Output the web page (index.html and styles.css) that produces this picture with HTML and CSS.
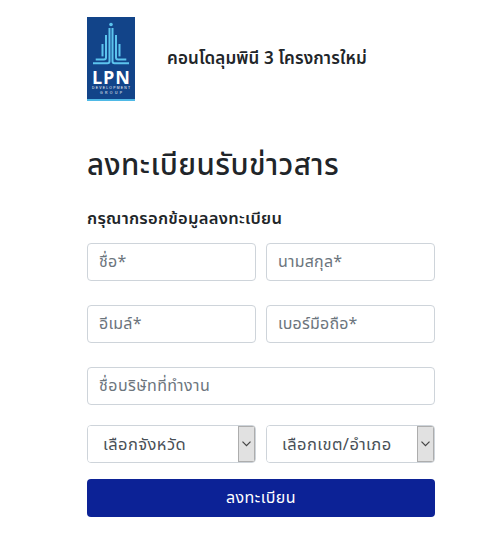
FILE: index.html
```html
<!DOCTYPE html>
<html lang="th">
<head>
<meta charset="UTF-8">
<meta name="viewport" content="width=device-width, initial-scale=1.0">
<title>ลงทะเบียนรับข่าวสาร</title>
<link rel="stylesheet" href="styles.css">
</head>
<body>
    <div class="container">
        <div class="header">
            <svg class="logo" viewBox="0 0 48 84">
                <rect width="48" height="84" fill="#124489"/>
                <rect y="82" width="48" height="2" fill="#4fb9e6"/>
                <circle cx="24" cy="7.5" r="1.8" fill="#5cc4ee"/>
                <g fill="none" stroke="#5cc4ee" stroke-width="2">
                    <path d="M22.5 11v33.3q0 2-2 2H6"/>
                    <path d="M25.5 11v33.3q0 2 2 2H42"/>
                    <path d="M19 18v22.4q0 2-2 2H8.7"/>
                    <path d="M29 18v22.4q0 2 2 2h8.3"/>
                    <path d="M15.5 27v12.4"/>
                    <path d="M32.5 27v12.4"/>
                </g>
                <text class="logo-name" x="5" y="67" textLength="38">LPN</text>
                <text class="logo-sub" x="5" y="72" textLength="38">DEVELOPMENT</text>
                <text class="logo-sub" x="13" y="77" textLength="22">GROUP</text>
            </svg>
            <h1 class="project">คอนโดลุมพินี 3 โครงการใหม่</h1>
        </div>
        <h2 class="title">ลงทะเบียนรับข่าวสาร</h2>
        <h3 class="subtitle">กรุณากรอกข้อมูลลงทะเบียน</h3>
        <form>
            <div class="row">
                <input class="field" type="text" placeholder="ชื่อ*">
                <input class="field" type="text" placeholder="นามสกุล*">
            </div>
            <div class="row">
                <input class="field" type="text" placeholder="อีเมล์*">
                <input class="field" type="text" placeholder="เบอร์มือถือ*">
            </div>
            <div class="row company">
                <input class="field" type="text" placeholder="ชื่อบริษัทที่ทำงาน">
            </div>
            <div class="row selects">
                <div class="select-box">
                    <select class="select"><option>เลือกจังหวัด</option></select>
                    <span class="arrow"><svg width="9" height="6" viewBox="0 0 9 6"><path d="M.5.7l4 4 4-4"/></svg></span>
                </div>
                <div class="select-box">
                    <select class="select"><option>เลือกเขต/อำเภอ</option></select>
                    <span class="arrow"><svg width="9" height="6" viewBox="0 0 9 6"><path d="M.5.7l4 4 4-4"/></svg></span>
                </div>
            </div>
            <button class="submit" type="button">ลงทะเบียน</button>
        </form>
    </div>
</body>
</html>
```
FILE: styles.css
```css
* {
    box-sizing: border-box;
}
body {
    margin: 0;
    font-family: "Noto Sans Thai", "Noto Sans", sans-serif;
    font-size: 16px;
    color: #212529;
    background-color: #fff;
}
.container {
    width: 348px;
    margin-left: 87px;
    padding-top: 17px;
}
.header {
    display: flex;
    align-items: center;
    gap: 32px;
    height: 84px;
}
.logo {
    flex: none;
    width: 48px;
    height: 84px;
}
.logo-name, .logo-sub {
    fill: #fff;
    font-family: "Open Sans", sans-serif;
    font-weight: 700;
}
.logo-name {
    font-size: 18px;
}
.logo-sub {
    font-family: "Liberation Sans", sans-serif;
    font-size: 3.4px;
    font-weight: 400;
}
h1, h2, h3 {
    margin: 0;
    font-weight: 600;
    white-space: nowrap;
}
.project {
    font-size: 17px;
    line-height: 24px;
    letter-spacing: 0.12px;
}
.title {
    margin-top: 45px;
    font-size: 29.5px;
    font-weight: 500;
    line-height: 40px;
    letter-spacing: 0.45px;
}
.subtitle {
    margin-top: 21px;
    margin-bottom: 12px;
    font-size: 16.5px;
    line-height: 24px;
    letter-spacing: 0.28px;
}
.row {
    display: flex;
    gap: 10px;
    margin-bottom: 24px;
}
.field {
    flex: 1;
    min-width: 0;
    height: 38px;
    padding: 6px 11px;
    border: 1px solid #ced4da;
    border-radius: 4px;
    font-family: inherit;
    font-size: 16px;
    letter-spacing: 0.2px;
    color: #495057;
}
.field::placeholder {
    color: #6c757d;
    opacity: 1;
}
.company {
    margin-bottom: 20px;
}
.company .field {
    letter-spacing: 0.45px;
}
.selects {
    margin-bottom: 16px;
}
.select-box {
    display: flex;
    flex: 1;
    min-width: 0;
    height: 38px;
    border: 1px solid #ced4da;
    border-radius: 4px;
    overflow: hidden;
}
.select {
    flex: 1;
    min-width: 0;
    padding: 1px 0 0 15px;
    border: 0;
    appearance: none;
    background: #fff;
    font-family: inherit;
    font-size: 16.5px;
    letter-spacing: 0.45px;
    color: #495057;
}
.arrow {
    display: flex;
    align-items: center;
    justify-content: center;
    width: 17px;
    border: 1px solid #adadad;
    background-color: #e1e1e1;
}
.arrow path {
    fill: none;
    stroke: #444;
    stroke-width: 1.2;
}
.submit {
    display: block;
    width: 100%;
    height: 38px;
    padding: 0;
    border: 0;
    border-radius: 4px;
    background-color: #0c2296;
    color: #fff;
    font-family: inherit;
    font-size: 16px;
    letter-spacing: 0.45px;
}
```
